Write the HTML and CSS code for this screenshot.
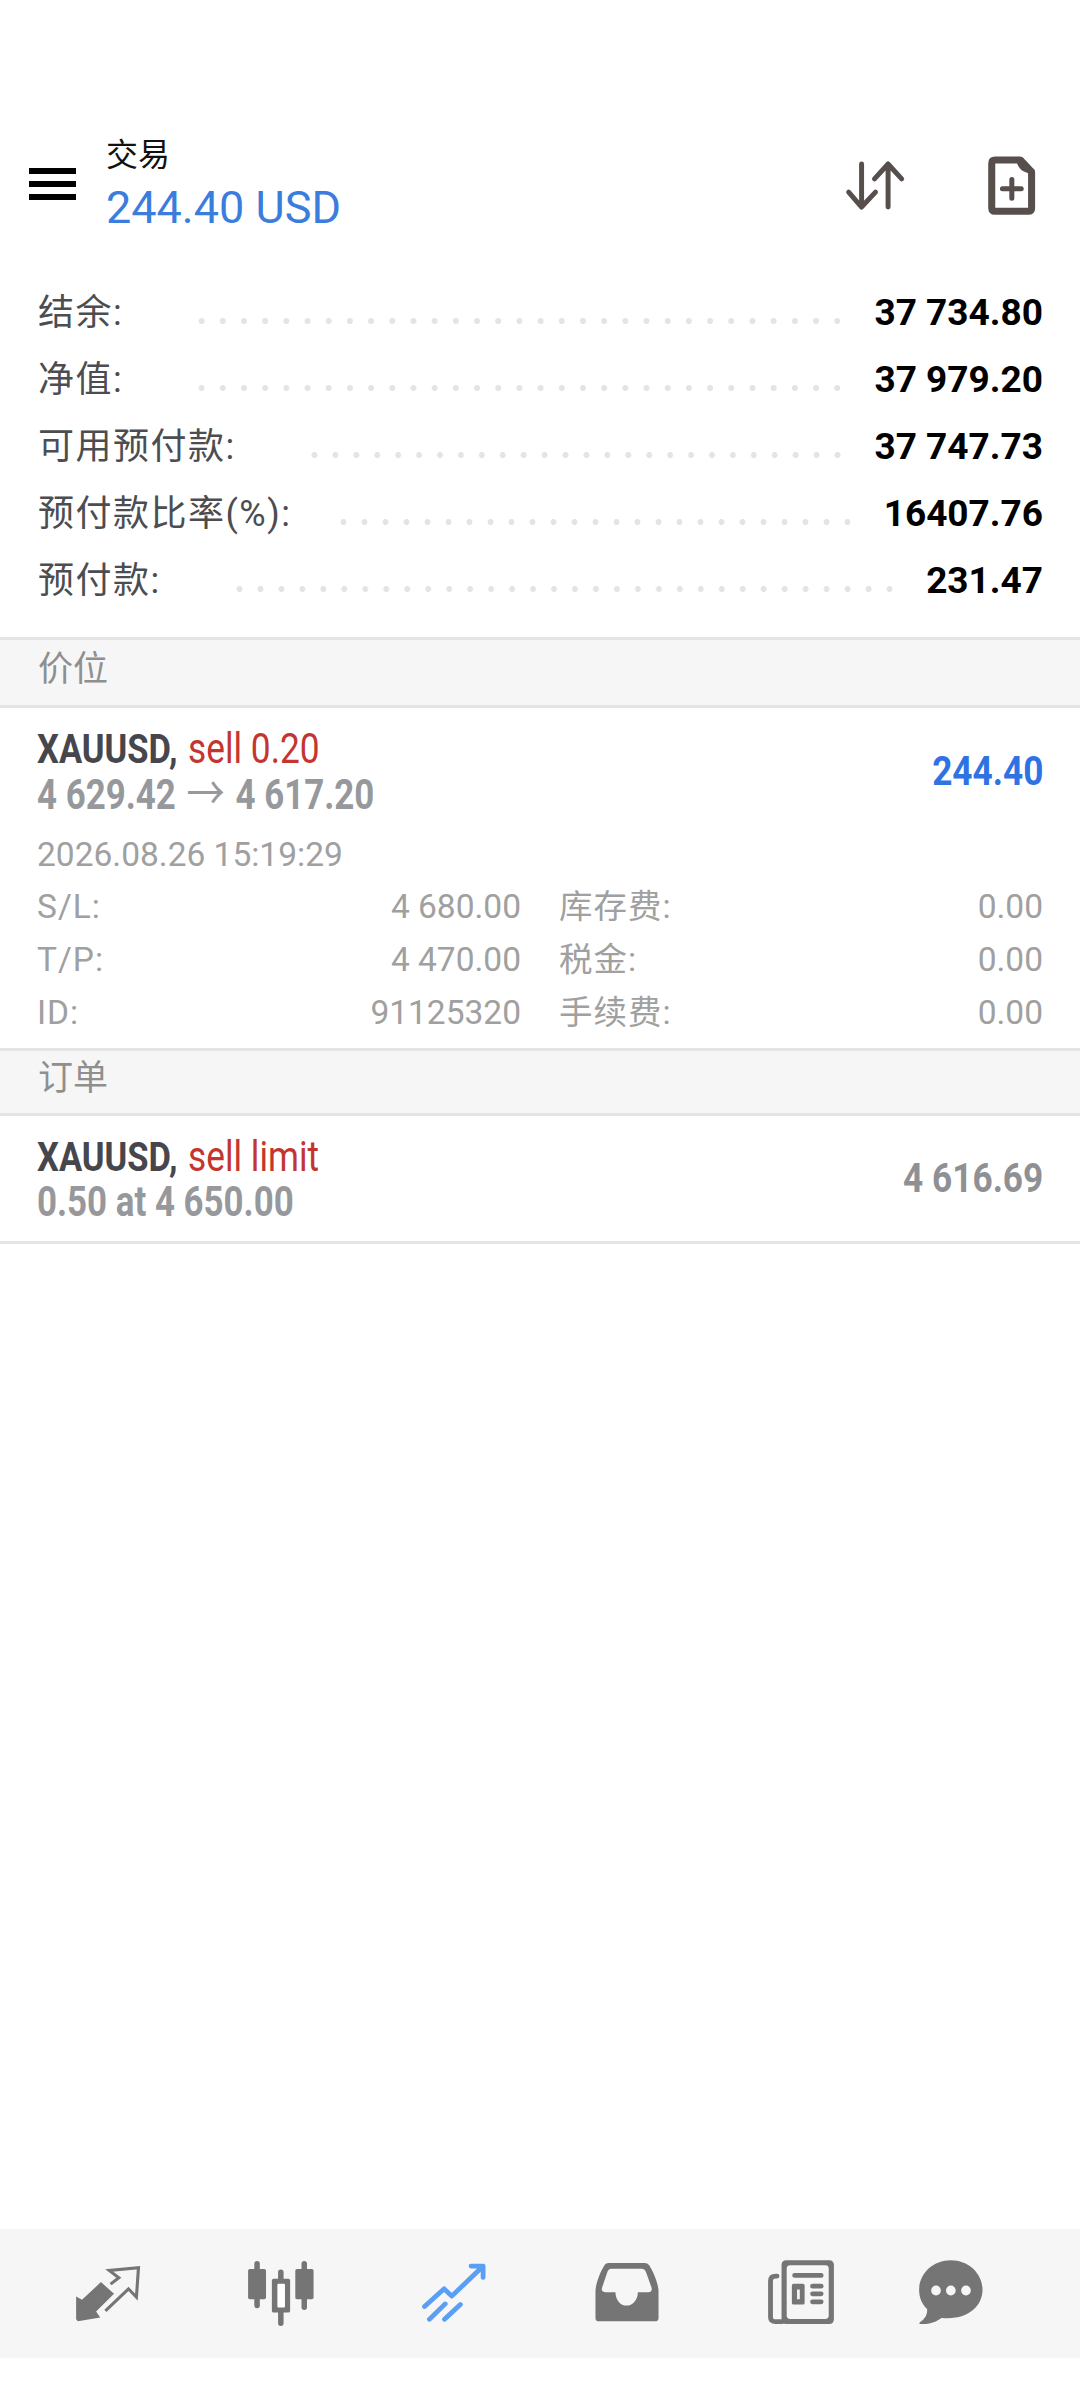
FILE: index.html
```html
<!DOCTYPE html>
<html>
    <head>
        <meta charset="UTF-8">
        <title>交易</title>
        <link rel="stylesheet" href="styles.css">
    </head>
    <body>
        <header class="top-bar">
            <div class="burger"><span></span><span></span><span></span></div>
            <div class="top-title">
                <div class="top-name">交易</div>
                <div class="top-profit">244.40 USD</div>
            </div>
            <svg class="icon-sort" viewBox="130 80 190 160">
                <path d="M186 95V225M147 180L186 225L228 180M266 225V95M225 140L266 95L307 140"/>
            </svg>
            <svg class="icon-file" viewBox="550 60 170 200">
                <path class="sheet" d="M586 84H660L695 120V227Q695 237 685 237H586Q576 237 576 227V94Q576 84 586 84Z"/>
                <path class="fold" d="M648 76H668L704 114V124C672 126 650 110 648 76Z"/>
                <path d="M608 170H664M636 142V198"/>
            </svg>
        </header>

        <section class="summary">
            <div class="sum-row"><span class="sum-label">结余:</span><span class="dots"></span><span class="sum-value">37 734.80</span></div>
            <div class="sum-row"><span class="sum-label">净值:</span><span class="dots"></span><span class="sum-value">37 979.20</span></div>
            <div class="sum-row"><span class="sum-label">可用预付款:</span><span class="dots"></span><span class="sum-value">37 747.73</span></div>
            <div class="sum-row"><span class="sum-label">预付款比率(%):</span><span class="dots dots-short"></span><span class="sum-value">16407.76</span></div>
            <div class="sum-row"><span class="sum-label">预付款:</span><span class="dots"></span><span class="sum-value">231.47</span></div>
        </section>

        <div class="band">价位</div>
        <section class="trade">
            <div class="trade-head">
                <div>
                    <div class="line"><b class="cond symbol">XAUUSD,</b> <span class="cond side">sell 0.20</span></div>
                    <div class="line"><b class="cond prices">4 629.42<span class="arrow">→</span>4 617.20</b></div>
                </div>
                <b class="cond-r profit">244.40</b>
            </div>
            <div class="trade-date">2026.08.26 15:19:29</div>
            <div class="detail">
                <div class="kv"><span>S/L:</span><span>4 680.00</span></div>
                <div class="kv"><span>库存费:</span><span>0.00</span></div>
                <div class="kv"><span>T/P:</span><span>4 470.00</span></div>
                <div class="kv"><span>税金:</span><span>0.00</span></div>
                <div class="kv"><span>ID:</span><span>91125320</span></div>
                <div class="kv"><span>手续费:</span><span>0.00</span></div>
            </div>
        </section>

        <div class="band band-short">订单</div>
        <section class="order">
            <div>
                <div class="line"><b class="cond symbol">XAUUSD,</b> <span class="cond side">sell limit</span></div>
                <div class="line"><b class="cond prices">0.50 at 4 650.00</b></div>
            </div>
            <b class="cond-r muted">4 616.69</b>
        </section>

        <nav class="tabs">
            <svg viewBox="208 146 209 209" preserveAspectRatio="none">
                <path class="solid" d="M220 258L237 268L292 215L330 250L278 303L290 321L225 332L220 326Z"/>
                <path class="thin" d="M320 221L344 202L316 180L401 172L395 260L372 235L305 301"/>
            </svg>
            <svg viewBox="709 146 209 209" preserveAspectRatio="none">
                <path class="wick" d="M744 160V285M813 185V338M881 160V290"/>
                <rect class="solid" x="718" y="176" width="52" height="90" rx="5"/>
                <rect class="solid" x="855" y="176" width="53" height="90" rx="5"/>
                <rect class="solid" x="787" y="205" width="53" height="101" rx="5"/>
                <rect class="hole-white" x="803" y="220" width="22" height="71" rx="3"/>
            </svg>
            <svg class="active" viewBox="1212 146 209 209" preserveAspectRatio="none">
                <path d="M1231 288L1288 235L1310 257L1396 172M1366 167H1401V201M1245 326L1291 280M1289 326L1335 282"/>
            </svg>
            <svg viewBox="149 146 209 209" preserveAspectRatio="none">
                <path class="solid" fill-rule="evenodd" d="M162 240C164 215 176 185 188 165Q192 158 200 158H305Q313 158 318 165C330 185 343 215 345 240V322Q345 332 335 332H172Q162 332 162 322ZM207 175Q200 175 197 183L181 232Q178 245 190 245H220C220 268 234 285 252 285C270 285 285 268 285 245H315Q327 245 325 232L308 183Q305 175 297 175Z"/>
            </svg>
            <svg viewBox="655 146 209 209" preserveAspectRatio="none">
                <path class="solid" fill-rule="evenodd" d="M717 150H841Q855 150 855 164V326Q855 340 841 340H717Q703 340 703 326V164Q703 150 717 150ZM728 165Q718 165 718 175V315Q718 325 728 325H830Q840 325 840 315V175Q840 165 830 165Z"/>
                <path class="line-icon" d="M690 197H686Q671 197 671 212V320Q671 333 686 333H705M741 195H818M793 227H818M793 250H818M793 274H818"/>
                <path class="solid" fill-rule="evenodd" d="M738 220H765Q770 220 770 225V277Q770 282 765 282H738Q733 282 733 277V225Q733 220 738 220ZM748 237V266H756V237Z"/>
            </svg>
            <svg viewBox="1089 146 209 209" preserveAspectRatio="none">
                <path class="solid" d="M1193 150C1245 150 1285 190 1285 238C1285 288 1240 330 1166 322C1150 335 1125 342 1104 340C1100 340 1101 336 1104 334C1118 325 1126 310 1124 295C1108 280 1101 260 1101 238C1101 190 1141 150 1193 150Z"/>
                <ellipse class="hole" cx="1150" cy="240" rx="14" ry="15"/>
                <ellipse class="hole" cx="1193" cy="240" rx="14" ry="15"/>
                <ellipse class="hole" cx="1237" cy="240" rx="14" ry="15"/>
            </svg>
        </nav>
    </body>
</html>
```

FILE: styles.css
```css
html, body {
    margin: 0;
    padding: 0;
}

body {
    width: 1080px;
    height: 2400px;
    overflow: hidden;
    display: flex;
    flex-direction: column;
    background-color: #fff;
    font-family: Roboto, "Noto Sans CJK SC", sans-serif;
    color: #555;
}

/* top bar */
.top-bar {
    display: flex;
    align-items: center;
    height: 110px;
    margin-top: 130px;
    padding-left: 29px;
}

.burger {
    display: flex;
    flex-direction: column;
    gap: 7px;
    width: 47px;
    margin-right: 30px;
    margin-bottom: 3px;
}

.burger span {
    height: 6px;
    background-color: #000;
}

.top-title {
    flex: 1;
}

.top-name {
    font-size: 32px;
    line-height: 45px;
    color: #111;
}

.top-profit {
    font-size: 45px;
    line-height: 60px;
    color: #3b7ddd;
}

.icon-sort, .icon-file {
    fill: none;
    stroke: #574f4c;
    stroke-width: 15;
    stroke-linecap: round;
    stroke-linejoin: round;
}

.icon-sort {
    width: 63px;
    height: 53px;
    margin-right: 77px;
}

.icon-file {
    width: 57px;
    height: 67px;
    margin-right: 40px;
}

.icon-file .sheet {
    stroke-width: 21;
}

.icon-file .fold {
    fill: #574f4c;
    stroke: none;
}

/* balance list */
.summary {
    padding: 39px 37px 23px 38px;
}

.sum-row {
    display: flex;
    align-items: center;
    height: 67px;
}

.sum-label {
    margin-top: -7px;
    font-size: 36px;
    letter-spacing: 1.5px;
    color: #4c4d50;
}

.dots {
    flex: 1;
    height: 8px;
    margin: 16px 26px 0 68px;
    background-image: radial-gradient(circle, #e4e4e4 2.7px, transparent 3.3px);
    background-size: 21px 8px;
    background-repeat: round no-repeat;
}

.dots-short {
    margin-left: 42px;
}

.sum-value {
    font-size: 37px;
    font-weight: 700;
    color: #000;
}

/* section bands */
.band {
    height: 65px;
    padding-left: 38px;
    border-top: 3px solid #e4e4e4;
    border-bottom: 3px solid #e4e4e4;
    background-color: #f6f6f6;
    font-size: 35px;
    line-height: 60px;
    color: #8f8f8f;
}

.band-short {
    height: 62px;
    line-height: 56px;
}

/* condensed numbers and names */
.line {
    height: 45px;
    font-size: 40px;
    line-height: 45px;
    white-space: nowrap;
}

.cond, .cond-r {
    display: inline-block;
    font-size: 40px;
    line-height: 45px;
}

.cond {
    transform-origin: left center;
}

.cond-r {
    transform: scaleX(.88);
    transform-origin: right center;
}

.symbol {
    width: 141px;
    transform: scaleX(.863);
    color: #46464c;
}

.side {
    font-size: 42px;
    transform: scaleX(.84);
    color: #c5352f;
}

.prices {
    font-size: 42px;
    transform: scaleX(.83);
    color: #96989c;
}

.arrow {
    margin: 0 13px;
    font-size: 46px;
    font-weight: 400;
}

.muted {
    color: #8e9094;
}

.profit {
    color: #2f72e4;
}

/* open position */
.trade {
    padding: 18px 37px 9px;
}

.trade-head, .order {
    display: flex;
    justify-content: space-between;
    align-items: center;
}

.trade-date {
    margin-top: 17px;
    font-size: 33.5px;
    line-height: 44px;
    color: #a0a0a0;
}

.detail {
    display: grid;
    grid-template-columns: 1fr 1fr;
    column-gap: 38px;
    margin-top: 3px;
}

.kv {
    display: flex;
    justify-content: space-between;
    font-size: 33.5px;
    line-height: 53px;
    color: #a0a0a0;
}

.kv span:first-child {
    letter-spacing: 1px;
}

/* pending order */
.order {
    height: 125px;
    padding: 0 37px;
    border-bottom: 3px solid #e4e4e4;
}

/* bottom tabs */
.tabs {
    display: grid;
    grid-template-columns: repeat(4, 173px) 175px 126px;
    justify-items: center;
    align-items: center;
    height: 129px;
    margin-top: auto;
    margin-bottom: 42px;
    padding-left: 21px;
    background-color: #f6f6f6;
}

.tabs svg {
    width: 72px;
    height: 70px;
}

.tabs .solid {
    fill: #757575;
}

.tabs .thin {
    fill: none;
    stroke: #757575;
    stroke-width: 9;
}

.tabs .wick {
    fill: none;
    stroke: #757575;
    stroke-width: 16;
    stroke-linecap: round;
}

.tabs .line-icon {
    fill: none;
    stroke: #757575;
    stroke-width: 14;
    stroke-linecap: round;
}

.tabs .hole {
    fill: #f6f6f6;
}

.tabs .hole-white {
    fill: #fff;
}

.tabs .active {
    fill: none;
    stroke: #5a9ff5;
    stroke-width: 14;
    stroke-linecap: round;
    stroke-linejoin: round;
}
```
